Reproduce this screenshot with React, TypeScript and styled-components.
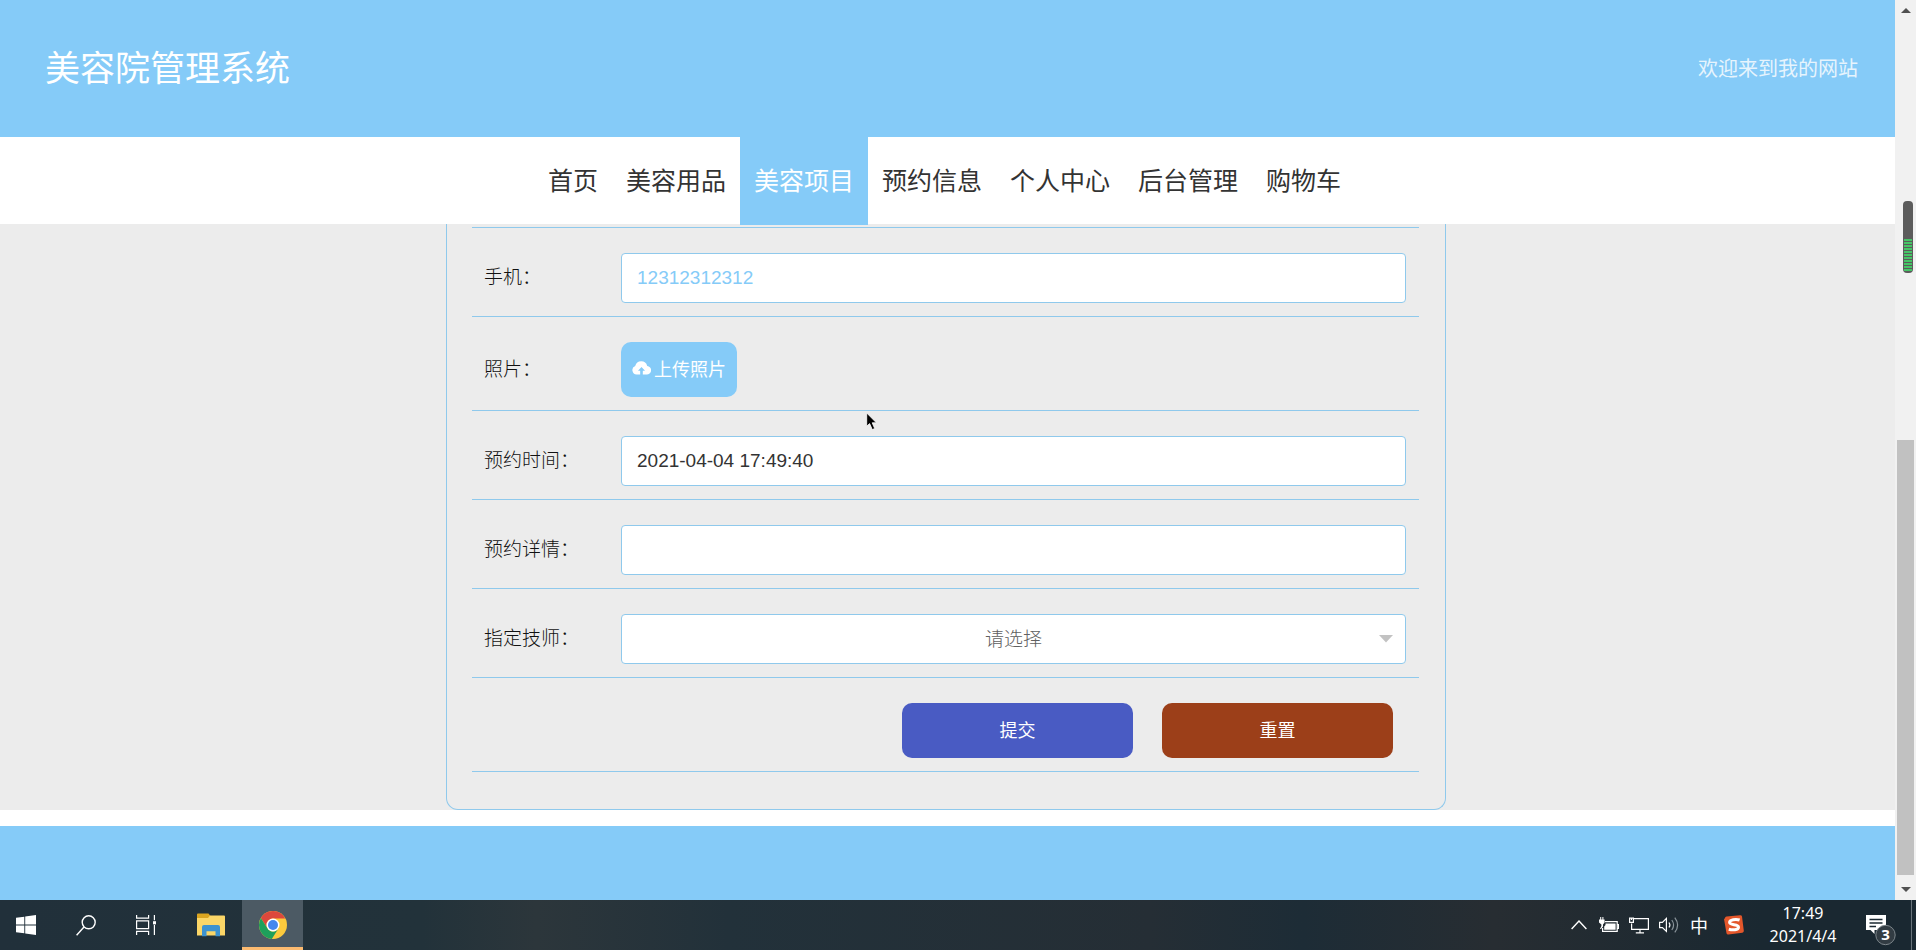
import React from "react";
import styled, { createGlobalStyle } from "styled-components";

const SKY = "#85cbf8";

const GlobalStyle = createGlobalStyle`
  * { box-sizing: border-box; }
  body {
    margin: 0;
    background: #fff;
    color: #333;
    font-family: "Liberation Sans", "Noto Sans CJK SC", sans-serif;
  }
  button, input, select { font-family: inherit; }
`;

const Desktop = styled.div`
  display: flex;
  flex-direction: column;
  min-height: 100vh;
`;

const Viewport = styled.div`
  display: flex;
  flex: 1;
`;

const Page = styled.div`
  display: flex;
  flex: 1;
  flex-direction: column;
  min-width: 0;
`;

const Header = styled.header`
  display: flex;
  align-items: center;
  justify-content: space-between;
  height: 137px;
  padding: 0 37px 0 45px;
  background: ${SKY};
  color: #fff;
`;

const SiteTitle = styled.h1`
  margin: 0;
  font-size: 35px;
  font-weight: 400;
  line-height: 48px;
`;

const Welcome = styled.span`
  font-size: 20px;
  line-height: 28px;
  opacity: 0.8;
`;

const Nav = styled.nav`
  display: flex;
  justify-content: center;
  height: 87px;
  padding-right: 6px;
  background: #fff;
`;

const NavLink = styled.a<{ $active?: boolean }>`
  height: 88px;
  padding: 0 14px;
  background: ${(p) => (p.$active ? SKY : "transparent")};
  color: ${(p) => (p.$active ? "#fff" : "#333")};
  font-size: 25px;
  line-height: 88px;
  text-decoration: none;
  white-space: nowrap;
  z-index: 1;
`;

const Main = styled.main`
  display: flex;
  justify-content: center;
  padding-right: 3px;
  background: #ececec;
`;

const Card = styled.form`
  width: 1000px;
  max-width: 100%;
  padding: 3px 26px 37px 25px;
  border: 1px solid #8fc9ec;
  border-top: 0;
  border-radius: 0 0 12px 12px;
`;

const Rows = styled.div`
  border-top: 1px solid #8fc9ec;
`;

const Row = styled.div`
  display: flex;
  align-items: center;
  padding: 25px 13px 13px 12px;
  border-bottom: 1px solid #8fc9ec;
`;

const Label = styled.label`
  flex: 0 0 137px;
  color: #111;
  font-size: 19px;
  font-weight: 300;
  line-height: 28px;
`;

const TextInput = styled.input<{ $muted?: boolean }>`
  flex: 1;
  min-width: 0;
  height: 50px;
  padding: 0 15px;
  border: 1px solid #8fc9ec;
  border-radius: 4px;
  outline: 0;
  background: #fff;
  color: ${(p) => (p.$muted ? SKY : "#333")};
  font-size: 19px;
`;

const SelectBox = styled.div`
  position: relative;
  flex: 1;
`;

const Select = styled.select`
  display: block;
  width: 100%;
  height: 50px;
  padding: 0 14px;
  border: 1px solid #8fc9ec;
  border-radius: 4px;
  appearance: none;
  background: #fff;
  color: #606060;
  font-size: 19px;
  font-weight: 300;
  text-align-last: center;
`;

const SelectArrow = styled.svg`
  position: absolute;
  top: 21px;
  right: 13px;
  pointer-events: none;
`;

const Button = styled.button<{ $color: string; $wide?: boolean }>`
  display: flex;
  align-items: center;
  justify-content: center;
  gap: 3px;
  width: ${(p) => (p.$wide ? "231px" : "116px")};
  height: 55px;
  padding: 0 0 3px;
  border: 0;
  border-radius: 10px;
  background: ${(p) => p.$color};
  color: #fff;
  font-size: 18px;
  white-space: nowrap;
`;

const Actions = styled(Row)`
  justify-content: flex-end;
  gap: 29px;
  padding-right: 26px;
`;

const Footer = styled.footer`
  flex: 1;
  min-height: 74px;
  margin-top: 16px;
  background: ${SKY};
`;

const ScrollTrack = styled.aside`
  position: relative;
  display: flex;
  flex: 0 0 21px;
  flex-direction: column;
  background: #f1f1f1;
`;

const ScrollArrow = styled.button`
  display: flex;
  align-items: center;
  justify-content: center;
  height: 21px;
  padding: 0;
  border: 0;
  background: transparent;
`;

const ScrollSpace = styled.div`
  flex: 419;
`;

const ScrollThumb = styled.div`
  flex: 435;
  margin: 0 2px 4px;
  background: #c1c1c1;
`;

const Meter = styled.svg`
  position: absolute;
  top: 200px;
  right: 2px;
`;

const Taskbar = styled.footer`
  display: flex;
  justify-content: space-between;
  height: 50px;
  background: linear-gradient(90deg, #21303a, #22323a 22%, #2c363b 28%, #22313a 38%, #252e35 60%, #1d2c36 68%, #272d32 78%, #1a2831 92%);
  color: #fff;
`;

const TaskGroup = styled.div`
  display: flex;
`;

const AppGroup = styled(TaskGroup)`
  gap: 1px;
  margin-left: 8px;
`;

const TaskButton = styled.button<{ $width: number; $active?: boolean }>`
  display: flex;
  align-items: center;
  justify-content: center;
  width: ${(p) => p.$width}px;
  height: 50px;
  padding: ${(p) => (p.$active ? "3px 0 0" : "0")};
  border: 0;
  border-bottom: ${(p) => (p.$active ? "3px solid #fcbb70" : "0")};
  background: ${(p) => (p.$active ? "#4c5a64" : "transparent")};
  color: #fff;
`;

const Clock = styled.time`
  width: 98px;
  padding-top: 2px;
  font-family: "Noto Sans", sans-serif;
  font-size: 16px;
  line-height: 23px;
  text-align: center;
`;

const ShowDesktop = styled.button`
  width: 5px;
  padding: 0;
  border: 0;
  border-left: 1px solid #68737a;
  background: transparent;
`;

const Pointer = styled.svg`
  position: absolute;
  top: 412px;
  left: 866px;
  pointer-events: none;
`;

const BadgeText = styled.text`
  font-family: "Noto Sans", sans-serif;
  font-size: 15px;
  font-weight: 700;
`;

const navItems = ["首页", "美容用品", "美容项目", "预约信息", "个人中心", "后台管理", "购物车"];

const CloudUpload = () => (
  <svg width="19" height="14" viewBox="0 0 19 14" aria-hidden="true">
    <path
      fill="#fff"
      fillRule="evenodd"
      d="M8.2 13.5H4.6A4.4 4.4 0 0 1 3.2 5 6.2 6.2 0 0 1 15.2 4.9 4.3 4.3 0 0 1 14.4 13.5H10.8V9.8H13L9.5 6 6 9.8H8.2Z"
    />
  </svg>
);

const WindowsLogo = () => (
  <svg width="20" height="20" viewBox="0 0 20 20" fill="#fff" aria-hidden="true">
    <path d="M0 2.8 8.3 1.7V9.5H0ZM9.2 1.5 20 0V9.5H9.2ZM0 10.4H8.3V18.3L0 17.2ZM9.2 10.4H20V20L9.2 18.4Z" />
  </svg>
);

const SearchIcon = () => (
  <svg width="20" height="21" viewBox="0 0 20 21" fill="none" stroke="#fff" strokeWidth="1.4" aria-hidden="true">
    <circle cx="12.7" cy="7.3" r="6.5" />
    <path d="M8 12 .6 20.2" />
  </svg>
);

const TaskViewIcon = () => (
  <svg width="20" height="20" viewBox="0 0 20 20" fill="none" stroke="#fff" strokeWidth="1.2" aria-hidden="true">
    <path d="M.6 0V3.2H12.6V0M.6 5.8H12.6V13.6H.6ZM.6 20V16.4H12.6V20M18.4 0V5.2M18.4 10V20" />
    <path fill="#fff" stroke="none" d="M17 6.2H20V9.4H17Z" />
  </svg>
);

const FolderIcon = () => (
  <svg width="28" height="24" viewBox="0 0 28 24" aria-hidden="true">
    <path fill="#dba520" d="M0 1.5Q0 .5 1 .5H11.5L13.5 3H27V8H0Z" />
    <path fill="#fbd667" d="M0 5H11L13 2.6H27Q28 2.6 28 3.6V22.5H0Z" />
    <path fill="#3d92cf" d="M5 23.3V14Q5 12 7 12H21Q23 12 23 14V23.3H18.5V18.2H9.5V23.3Z" />
  </svg>
);

const ChromeIcon = () => (
  <svg width="28" height="28" viewBox="0 0 28 28" aria-hidden="true">
    <circle cx="14" cy="14" r="14" fill="#fcca3d" />
    <path fill="#dc483c" d="M1.9 7A14 14 0 0 1 26.3 7.5H14A6.5 6.5 0 0 0 8.4 17.2Z" />
    <path fill="#1ea05b" d="M1.9 7A14 14 0 0 0 12.8 28L19.6 17.3A6.5 6.5 0 0 1 8.4 17.3Z" />
    <circle cx="14" cy="14" r="6.5" fill="#fff" />
    <circle cx="14" cy="14" r="5" fill="#4587ee" />
  </svg>
);

const CaretUpIcon = () => (
  <svg width="16" height="10" viewBox="0 0 16 10" fill="none" stroke="#fff" strokeWidth="1.4" aria-hidden="true">
    <path d="M.6 9 8 1 15.4 9" />
  </svg>
);

const BatteryIcon = () => (
  <svg width="20" height="16" viewBox="0 0 20 16" fill="none" stroke="#fff" strokeWidth="1.2" aria-hidden="true">
    <path d="M6 4.6H18.2V14.4H3.6V11M18.4 7.5H19.5V11.5H18.4" />
    <path fill="#fff" stroke="none" d="M6.5 6.4H16.6V12.7H5.2V9.5L6.5 8ZM1.2 0H2.2V2.5H3.4V0H4.4V2.5H5.6V5.5L4 7.5V9.5L2 12H1L2.4 9V7.4L0 5.5V2.5H1.2Z" />
  </svg>
);

const NetworkIcon = () => (
  <svg width="20" height="17" viewBox="0 0 20 17" fill="none" stroke="#fff" strokeWidth="1.2" aria-hidden="true">
    <path d="M5 1.6H19.4V12.4H2.6V6.5M11 12.4V15.8M6.8 15.8H15" />
    <path d="M.6 1.2H4.4V5.4H.6ZM2.5 1.2V3" />
  </svg>
);

const VolumeIcon = () => (
  <svg width="20" height="18" viewBox="0 0 20 18" fill="none" stroke="#fff" strokeWidth="1.2" aria-hidden="true">
    <path d="M.6 6.4H3.4L7.4 2.4V15.4L3.4 11.6H.6Z" />
    <path d="M10 6.5Q11.8 9 10 11.5" />
    <path stroke="#8a949a" d="M12.8 4Q16.4 9 12.8 14M15.8 1.6Q21.4 9 15.8 16.4" />
  </svg>
);

const ImeGlyph = styled.span`
  font-family: "Noto Sans CJK SC", sans-serif;
  font-size: 18px;
  line-height: 24px;
`;

const SogouIcon = () => (
  <svg width="20" height="20" viewBox="0 0 20 20" aria-hidden="true">
    <path fill="#e4572b" d="M1 3.2Q1 1.8 2.5 1.6L16 .2Q17.7 0 18 1.6L19.8 15.8Q20 17.4 18.3 17.7L4.4 19.6Q2.9 19.8 2.5 18.2L0 4Z" />
    <path fill="none" stroke="#fff" strokeWidth="3" d="M15.6 5C12 3.7 5.5 4.6 5.6 7.5 5.7 10.6 14.6 8.7 14.5 12.1 14.4 15.2 8.4 15.3 4.8 14.2" />
  </svg>
);

const NotificationIcon = () => (
  <svg width="32" height="44" viewBox="2 -10 32 44" aria-hidden="true">
    <path fill="#fff" d="M2 2H22V17H10.5V21L6.5 17H2Z" />
    <path stroke="#1a2831" strokeWidth="1.4" d="M5.5 6.5H18.5M5.5 10H18.5M5.5 13.5H12" />
    <circle cx="21.5" cy="22" r="9.7" fill="#323c43" stroke="#7d868b" />
    <BadgeText x="21.5" y="27" textAnchor="middle" fill="#fff">3</BadgeText>
  </svg>
);

const ScrollTriangle = ({ down }: { down?: boolean }) => (
  <svg width="10" height="5" viewBox="0 0 10 5" fill="#505050" aria-hidden="true">
    <path d={down ? "M0 0H10L5 5Z" : "M0 5H10L5 0Z"} />
  </svg>
);

export default function App() {
  return (
    <>
      <GlobalStyle />
      <Desktop>
        <Viewport>
          <Page>
            <Header>
              <SiteTitle>美容院管理系统</SiteTitle>
              <Welcome>欢迎来到我的网站</Welcome>
            </Header>
            <Nav>
              {navItems.map((item) => (
                <NavLink key={item} href="#" $active={item === "美容项目"}>
                  {item}
                </NavLink>
              ))}
            </Nav>
            <Main>
              <Card onSubmit={(e) => e.preventDefault()}>
                <Rows>
                  <Row>
                    <Label htmlFor="phone">手机：</Label>
                    <TextInput id="phone" type="tel" defaultValue="12312312312" $muted />
                  </Row>
                  <Row>
                    <Label htmlFor="photo">照片：</Label>
                    <Button id="photo" type="button" $color={SKY}>
                      <CloudUpload />
                      上传照片
                    </Button>
                  </Row>
                  <Row>
                    <Label htmlFor="time">预约时间：</Label>
                    <TextInput id="time" type="text" defaultValue="2021-04-04 17:49:40" />
                  </Row>
                  <Row>
                    <Label htmlFor="detail">预约详情：</Label>
                    <TextInput id="detail" type="text" />
                  </Row>
                  <Row>
                    <Label htmlFor="technician">指定技师：</Label>
                    <SelectBox>
                      <Select id="technician" defaultValue="">
                        <option value="">请选择</option>
                      </Select>
                      <SelectArrow width="14" height="8" viewBox="0 0 14 8" aria-hidden="true">
                        <path fill="#c2c2c2" d="M0 0H14L7 7.5Z" />
                      </SelectArrow>
                    </SelectBox>
                  </Row>
                  <Actions>
                    <Button type="submit" $color="#495bc3" $wide>提交</Button>
                    <Button type="reset" $color="#9c3f19" $wide>重置</Button>
                  </Actions>
                </Rows>
              </Card>
            </Main>
            <Footer />
          </Page>
          <ScrollTrack>
            <ScrollArrow type="button" aria-label="向上滚动"><ScrollTriangle /></ScrollArrow>
            <ScrollSpace />
            <ScrollThumb />
            <ScrollArrow type="button" aria-label="向下滚动"><ScrollTriangle down /></ScrollArrow>
            <Meter width="12" height="74" viewBox="0 0 12 74" aria-hidden="true">
              <rect x="1" y="1" width="10" height="72" rx="4" fill="#5c5c5c" />
              {Array.from({ length: 11 }, (_, i) => (
                <rect key={i} x="2" y={39 + i * 3} width="8" height="2" fill="#45c566" />
              ))}
            </Meter>
          </ScrollTrack>
        </Viewport>
        <Taskbar>
          <TaskGroup>
            <TaskButton $width={52} aria-label="开始"><WindowsLogo /></TaskButton>
            <TaskButton $width={68} aria-label="搜索"><SearchIcon /></TaskButton>
            <TaskButton $width={52} aria-label="任务视图"><TaskViewIcon /></TaskButton>
            <AppGroup>
              <TaskButton $width={61} aria-label="文件资源管理器"><FolderIcon /></TaskButton>
              <TaskButton $width={61} $active aria-label="Chrome"><ChromeIcon /></TaskButton>
            </AppGroup>
          </TaskGroup>
          <TaskGroup>
            <TaskButton $width={30} aria-label="显示隐藏的图标"><CaretUpIcon /></TaskButton>
            <TaskButton $width={30} aria-label="电池"><BatteryIcon /></TaskButton>
            <TaskButton $width={30} aria-label="网络"><NetworkIcon /></TaskButton>
            <TaskButton $width={30} aria-label="音量"><VolumeIcon /></TaskButton>
            <TaskButton $width={30}><ImeGlyph>中</ImeGlyph></TaskButton>
            <TaskButton $width={40} aria-label="搜狗"><SogouIcon /></TaskButton>
            <Clock dateTime="2021-04-04T17:49">
              17:49
              <br />
              2021/4/4
            </Clock>
            <TaskButton $width={59} aria-label="通知"><NotificationIcon /></TaskButton>
            <ShowDesktop aria-label="显示桌面" />
          </TaskGroup>
        </Taskbar>
      </Desktop>
      <Pointer width="12" height="19" viewBox="0 0 12 19" aria-hidden="true">
        <path fill="#000" stroke="#fff" strokeWidth=".8" d="M.7 1V14.2L3.6 11.6 6.3 17.6 8.7 16.5 6.2 10.8H10.4Z" />
      </Pointer>
    </>
  );
}
